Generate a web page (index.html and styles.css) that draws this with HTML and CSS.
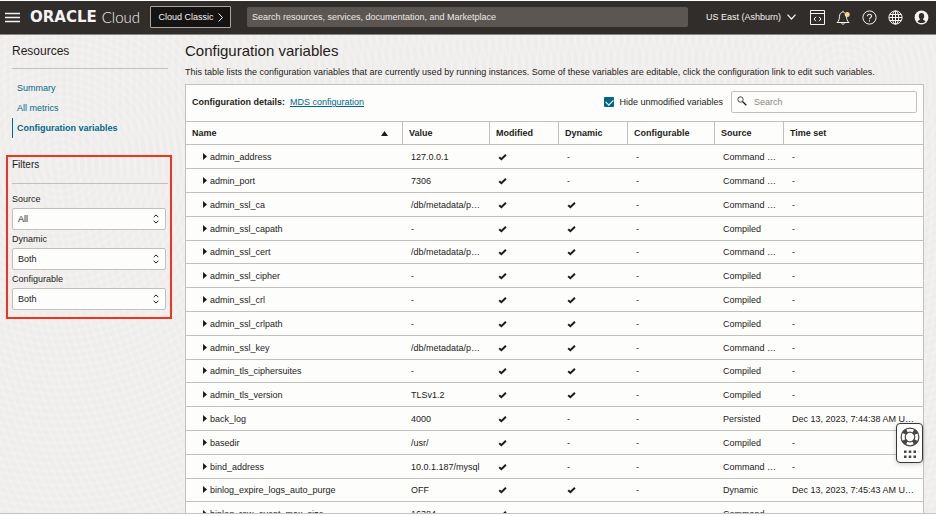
FILE: index.html
```html
<!DOCTYPE html>
<html lang="en">
<head>
<meta charset="utf-8">
<title>Configuration variables</title>
<link rel="stylesheet" href="styles.css">
</head>
<body>
<svg class="sprite" aria-hidden="true">
  <symbol id="check" viewBox="0 0 9 8"><path d="M1.2 4.2 3.4 6.2 7.9 1.7" fill="none" stroke="currentColor" stroke-width="2"/></symbol>
  <symbol id="caret" viewBox="0 0 4 7"><path d="M0 0 4 3.5 0 7z" fill="currentColor"/></symbol>
  <symbol id="updown" viewBox="0 0 6 10"><path d="M.7 3.2 3 .9l2.3 2.3M.7 6.8 3 9.1l2.3-2.3" fill="none" stroke="currentColor" stroke-width="1"/></symbol>
</svg>

<header class="topbar">
  <button class="icon-btn menu" aria-label="Menu"><svg width="15" height="11" viewBox="0 0 15 11"><path d="M0 1.5h15M0 5.5h15M0 9.5h15" stroke="currentColor" stroke-width="1.6"/></svg></button>
  <a class="brand" href="#"><span class="brand-name">ORACLE</span><span class="brand-sub">Cloud</span></a>
  <button class="classic">Cloud Classic <svg width="5" height="9" viewBox="0 0 5 9"><path d="M.6.5 4.4 4.5.6 8.5" fill="none" stroke="currentColor"/></svg></button>
  <input class="global-search" type="text" aria-label="Search" placeholder="Search resources, services, documentation, and Marketplace">
  <button class="icon-btn region">US East (Ashburn) <svg width="9" height="6" viewBox="0 0 9 6"><path d="M.5.7 4.5 5 8.5.7" fill="none" stroke="currentColor" stroke-width="1.2"/></svg></button>
  <nav class="tools" aria-label="Tools">
    <button class="icon-btn" aria-label="Developer tools"><svg width="15" height="15" viewBox="0 0 15 15" fill="none" stroke="currentColor"><path d="M.5.5h14v14H.5zM.5 3.5h14M6 6.8 4 9l2 2.2M9 6.8 11 9l-2 2.2"/></svg></button>
    <button class="icon-btn" aria-label="Notifications"><svg width="15" height="15" viewBox="0 0 15 15" fill="none" stroke="currentColor"><path d="M6.600 2.200C4.400 2.600 3.600 4.300 3.500 6.300c-.1 2.800-.5 4.600-2.500 6.200h12c-1.900-1.600-2.400-3.400-2.500-6.200C10.400 4.300 9.300 2.600 7.400 2.200M7 2.200V.8M5.500 12.700c.1 2 2.900 2 3 0"/><circle cx="11.200" cy="4.500" r="2.500" fill="#f7d68a" stroke="none"/></svg></button>
    <button class="icon-btn" aria-label="Help"><svg width="15" height="15" viewBox="0 0 15 15" fill="none" stroke="currentColor"><circle cx="7.500" cy="7.500" r="6.600"/><path d="M5.500 6.200c0-2.600 4-2.600 4 0 0 1.400-2 1.500-2 3M7.500 10.200v1.200" stroke-width="1.100"/></svg></button>
    <button class="icon-btn" aria-label="Language"><svg width="15" height="15" viewBox="0 0 15 15" fill="none" stroke="currentColor"><circle cx="7.500" cy="7.500" r="6.600"/><ellipse cx="7.500" cy="7.500" rx="3.200" ry="6.600"/><path d="M7.500.9v13.200M1 7.500h13M1.800 4.500h11.400M1.800 10.500h11.400"/></svg></button>
    <button class="icon-btn" aria-label="Profile"><svg width="15" height="15" viewBox="0 0 15 15"><circle cx="7.500" cy="7.500" r="6.900" fill="currentColor"/><path d="M7.500 3c-1.700 0-2.700 1.200-2.700 2.900 0 1.500.6 2.500 1.300 3-.2 1.200-2.100 1-2.600 2.500 2 2.200 6 2.200 8 0-.5-1.500-2.400-1.300-2.600-2.500.7-.5 1.300-1.500 1.300-3C10.200 4.200 9.200 3 7.500 3z" fill="#312d2a"/></svg></button>
  </nav>
</header>

<div class="layout">
  <aside class="sidebar">
    <h2 class="side-title">Resources</h2>
    <nav class="side-nav" aria-label="Resources">
      <a href="#">Summary</a>
      <a href="#">All metrics</a>
      <a href="#" class="active">Configuration variables</a>
    </nav>
    <section class="filters">
      <h3 class="filters-title">Filters</h3>
      <label for="f-source">Source</label>
      <div class="select"><select id="f-source"><option>All</option></select><svg width="6" height="10"><use href="#updown"/></svg></div>
      <label for="f-dynamic">Dynamic</label>
      <div class="select"><select id="f-dynamic"><option>Both</option></select><svg width="6" height="10"><use href="#updown"/></svg></div>
      <label for="f-config">Configurable</label>
      <div class="select"><select id="f-config"><option>Both</option></select><svg width="6" height="10"><use href="#updown"/></svg></div>
    </section>
  </aside>

  <main class="content">
    <h1>Configuration variables</h1>
    <p class="intro">This table lists the configuration variables that are currently used by running instances. Some of these variables are editable, click the configuration link to edit such variables.</p>
    <section class="panel">
      <div class="panel-bar">
        <strong>Configuration details:</strong>
        <a href="#">MDS configuration</a>
        <label class="hide"><input type="checkbox" checked>Hide unmodified variables</label>
        <div class="search">
          <svg width="10" height="10" viewBox="0 0 10 10" fill="none" stroke="currentColor"><circle cx="3.500" cy="3.500" r="2.700" stroke-width=".8"/><path d="M5.500 5.500 9.300 9.200" stroke-width="1.300"/></svg>
          <input type="text" aria-label="Search variables" placeholder="Search">
        </div>
      </div>
      <table>
        <colgroup><col class="c-name"><col class="c-wide"><col class="c-narrow"><col class="c-narrow"><col class="c-wide"><col class="c-narrow"><col></colgroup>
        <thead>
          <tr><th><span class="sort">Name <svg width="7" height="5" viewBox="0 0 7 5"><path d="M0 5 3.500 0 7 5z" fill="currentColor"/></svg></span></th><th>Value</th><th>Modified</th><th>Dynamic</th><th>Configurable</th><th>Source</th><th>Time set</th></tr>
        </thead>
        <tbody>
          <tr><td><svg class="caret"><use href="#caret"/></svg>admin_address</td><td>127.0.0.1</td><td><svg class="check"><use href="#check"/></svg></td><td>-</td><td>-</td><td>Command …</td><td>-</td></tr>
          <tr><td><svg class="caret"><use href="#caret"/></svg>admin_port</td><td>7306</td><td><svg class="check"><use href="#check"/></svg></td><td>-</td><td>-</td><td>Command …</td><td>-</td></tr>
          <tr><td><svg class="caret"><use href="#caret"/></svg>admin_ssl_ca</td><td>/db/metadata/p…</td><td><svg class="check"><use href="#check"/></svg></td><td><svg class="check"><use href="#check"/></svg></td><td>-</td><td>Command …</td><td>-</td></tr>
          <tr><td><svg class="caret"><use href="#caret"/></svg>admin_ssl_capath</td><td>-</td><td><svg class="check"><use href="#check"/></svg></td><td><svg class="check"><use href="#check"/></svg></td><td>-</td><td>Compiled</td><td>-</td></tr>
          <tr><td><svg class="caret"><use href="#caret"/></svg>admin_ssl_cert</td><td>/db/metadata/p…</td><td><svg class="check"><use href="#check"/></svg></td><td><svg class="check"><use href="#check"/></svg></td><td>-</td><td>Command …</td><td>-</td></tr>
          <tr><td><svg class="caret"><use href="#caret"/></svg>admin_ssl_cipher</td><td>-</td><td><svg class="check"><use href="#check"/></svg></td><td><svg class="check"><use href="#check"/></svg></td><td>-</td><td>Compiled</td><td>-</td></tr>
          <tr><td><svg class="caret"><use href="#caret"/></svg>admin_ssl_crl</td><td>-</td><td><svg class="check"><use href="#check"/></svg></td><td><svg class="check"><use href="#check"/></svg></td><td>-</td><td>Compiled</td><td>-</td></tr>
          <tr><td><svg class="caret"><use href="#caret"/></svg>admin_ssl_crlpath</td><td>-</td><td><svg class="check"><use href="#check"/></svg></td><td><svg class="check"><use href="#check"/></svg></td><td>-</td><td>Compiled</td><td>-</td></tr>
          <tr><td><svg class="caret"><use href="#caret"/></svg>admin_ssl_key</td><td>/db/metadata/p…</td><td><svg class="check"><use href="#check"/></svg></td><td><svg class="check"><use href="#check"/></svg></td><td>-</td><td>Command …</td><td>-</td></tr>
          <tr><td><svg class="caret"><use href="#caret"/></svg>admin_tls_ciphersuites</td><td>-</td><td><svg class="check"><use href="#check"/></svg></td><td><svg class="check"><use href="#check"/></svg></td><td>-</td><td>Compiled</td><td>-</td></tr>
          <tr><td><svg class="caret"><use href="#caret"/></svg>admin_tls_version</td><td>TLSv1.2</td><td><svg class="check"><use href="#check"/></svg></td><td><svg class="check"><use href="#check"/></svg></td><td>-</td><td>Compiled</td><td>-</td></tr>
          <tr><td><svg class="caret"><use href="#caret"/></svg>back_log</td><td>4000</td><td><svg class="check"><use href="#check"/></svg></td><td>-</td><td>-</td><td>Persisted</td><td>Dec 13, 2023, 7:44:38 AM U…</td></tr>
          <tr><td><svg class="caret"><use href="#caret"/></svg>basedir</td><td>/usr/</td><td><svg class="check"><use href="#check"/></svg></td><td>-</td><td>-</td><td>Compiled</td><td>-</td></tr>
          <tr><td><svg class="caret"><use href="#caret"/></svg>bind_address</td><td>10.0.1.187/mysql</td><td><svg class="check"><use href="#check"/></svg></td><td>-</td><td>-</td><td>Command …</td><td>-</td></tr>
          <tr><td><svg class="caret"><use href="#caret"/></svg>binlog_expire_logs_auto_purge</td><td>OFF</td><td><svg class="check"><use href="#check"/></svg></td><td><svg class="check"><use href="#check"/></svg></td><td>-</td><td>Dynamic</td><td>Dec 13, 2023, 7:45:43 AM U…</td></tr>
          <tr><td><svg class="caret"><use href="#caret"/></svg>binlog_row_event_max_size</td><td>16384</td><td><svg class="check"><use href="#check"/></svg></td><td>-</td><td>-</td><td>Command …</td><td>-</td></tr>
        </tbody>
      </table>
    </section>
  </main>
</div>

<button class="help-widget" aria-label="Support">
  <svg width="20" height="20" viewBox="0 0 20 20" fill="none" stroke="#4a4643"><circle cx="10" cy="10" r="6.800" stroke-width="4.600" stroke-dasharray="4.200 6.481" stroke-dashoffset="-3.240"/><circle cx="10" cy="10" r="8.900" stroke-width="1.200"/><circle cx="10" cy="10" r="4.800" stroke-width="1.200"/></svg>
  <svg width="14" height="9" viewBox="0 0 14 9" fill="#4a4643"><path d="M1 .500h2.500v2.500H1zM5.750.500h2.500v2.500h-2.500zM10.500.500H13v2.500h-2.500zM1 5.500h2.500V8H1zM5.750 5.500h2.500V8h-2.500zM10.500 5.500H13V8h-2.500z"/></svg>
</button>
</body>
</html>
```
FILE: styles.css
```css
* { box-sizing: border-box; }

body {
  margin: 0;
  height: 100vh;
  display: flex;
  flex-direction: column;
  overflow: hidden;
  padding: 1px 0 2px;
  background: #fff;
  color: #1e1b19;
  font: 9px/12px "Liberation Sans", Arial, sans-serif;
}

button, input, select { font: inherit; color: inherit; }
a { color: #00688c; }
svg { display: block; flex: none; }
h1, h2, h3, p { margin: 0; font-weight: 400; }
.sprite { position: absolute; width: 0; height: 0; }

/* Top bar */
.topbar {
  flex: none;
  display: flex;
  align-items: center;
  height: 34px;
  padding: 0 7px 1px 5px;
  background: #312d2a;
  border-bottom: 1px solid #8b8784;
  color: #f5f4f2;
}
.icon-btn {
  display: flex;
  align-items: center;
  padding: 0;
  border: 0;
  background: none;
  color: inherit;
}
.brand {
  display: flex;
  align-items: center;
  gap: 5px;
  margin-left: 10px;
  width: 120px;
  color: inherit;
  text-decoration: none;
}
.brand-name { font: 700 15px/18px "DejaVu Sans", sans-serif; }
.brand-sub { font: 300 15px/18px Lato, sans-serif; }
.classic {
  display: flex;
  align-items: center;
  justify-content: center;
  gap: 4px;
  width: 81px;
  height: 22px;
  padding: 0;
  background: #161412;
  border: 1px solid #aaa6a2;
  border-radius: 1px;
  white-space: nowrap;
}
.global-search {
  flex: 1;
  height: 20px;
  margin: 0 18px 0 16px;
  padding: 0 5px;
  border: 0;
  border-radius: 2px;
  background: #5b5652;
}
.global-search::placeholder { color: #eceae8; opacity: 1; }
.region { gap: 6px; white-space: nowrap; }
.tools { display: flex; gap: 11px; margin-left: 14px; }

/* Page */
.layout {
  flex: 1;
  min-height: 0;
  display: flex;
  gap: 13px;
  overflow: hidden;
  padding-right: 12px;
  border-bottom: 1px solid #c9c4c0;
  background:
    repeating-radial-gradient(circle at 60px 130px, transparent 0 3px, rgba(255, 255, 255, .2) 5px, transparent 7px),
    repeating-radial-gradient(circle at 90% 10%, transparent 0 3px, rgba(255, 255, 255, .2) 5px, transparent 7px),
    #efedeb;
}

/* Sidebar */
.sidebar { flex: none; width: 172px; padding-left: 6px; }
.side-title {
  margin: 0 4px 0 6px;
  padding: 8px 0 9px;
  font-size: 12px;
  line-height: 16px;
  border-bottom: 1px solid #c4c0bd;
}
.side-nav { margin: 9px 6px 17px; display: flex; flex-direction: column; }
.side-nav a {
  padding: 4px;
  border-left: 1px solid transparent;
  text-decoration: none;
}
.side-nav .active { border-left-color: #00688c; font-weight: 700; }
.filters {
  display: flex;
  flex-direction: column;
  padding: 0 4px 7px;
  border: 2px solid #f2331f;
}
.filters-title {
  margin: 0 -2px 6px 0;
  padding-bottom: 10px;
  font-size: 10px;
  line-height: 16px;
  border-bottom: 1px solid #c4c0bd;
}
.filters label { padding: 3px 0; }
.select { position: relative; }
.select select {
  appearance: none;
  display: block;
  width: 100%;
  height: 22px;
  padding: 0 5px;
  border: 1px solid #c4c0bd;
  border-radius: 2px;
  background: #fdfdfc;
}
.select svg { position: absolute; right: 7px; top: 6px; pointer-events: none; }

/* Content */
.content { flex: 1; min-width: 0; }
h1 { padding: 6px 0 5px; font-size: 15px; line-height: 20px; }
.intro { padding-bottom: 6px; white-space: nowrap; }
.panel { background: #fdfdfc; border: 1px solid #c4c0bd; }
.panel-bar {
  display: flex;
  align-items: center;
  height: 36px;
  padding: 0 6px 2px;
}
.panel-bar strong { margin-right: 5px; }
.hide { display: flex; align-items: center; gap: 5px; margin-left: auto; }
.hide input {
  appearance: none;
  position: relative;
  width: 10px;
  height: 10px;
  margin: 0;
  border-radius: 1px;
  background: #00688c;
}
.hide input::after {
  content: "";
  position: absolute;
  left: 3px;
  top: 1px;
  width: 4px;
  height: 6px;
  border: solid #fff;
  border-width: 0 1px 1px 0;
  transform: rotate(45deg);
}
.search { position: relative; width: 186px; margin-left: 8px; }
.search svg { position: absolute; left: 6px; top: 5px; }
.search input {
  display: block;
  width: 100%;
  height: 22px;
  padding: 0 22px;
  border: 1px solid #c4c0bd;
  border-radius: 2px;
  background: #fdfdfc;
}
.search input::placeholder { color: #8b8682; opacity: 1; }

table { width: 100%; table-layout: fixed; border-spacing: 0; }
.c-name { width: 216px; }
.c-wide { width: 87px; }
.c-narrow { width: 69px; }
th, td { height: 24px; padding: 0 0 0 9px; text-align: left; white-space: nowrap; border-bottom: 1px solid #c4c0bd; }
th { padding-left: 6px; border-top: 1px solid #c4c0bd; }
th + th { border-left: 1px solid #c4c0bd; }
tr:nth-child(5n) td { height: 23px; }
.sort { display: flex; align-items: center; justify-content: space-between; padding-right: 14px; }
td:first-child { padding-left: 17px; }
.caret { display: inline-block; width: 4px; height: 7px; margin-right: 3px; }
.check { width: 9px; height: 8px; }

/* Floating support widget */
.help-widget {
  position: fixed;
  right: 13px;
  bottom: 53px;
  display: flex;
  flex-direction: column;
  align-items: center;
  gap: 3px;
  width: 27px;
  padding: 3px 0;
  border: 1px solid #3c3835;
  border-radius: 4px;
  background: #fff;
  box-shadow: 0 1px 5px rgba(0, 0, 0, .2);
}
```
